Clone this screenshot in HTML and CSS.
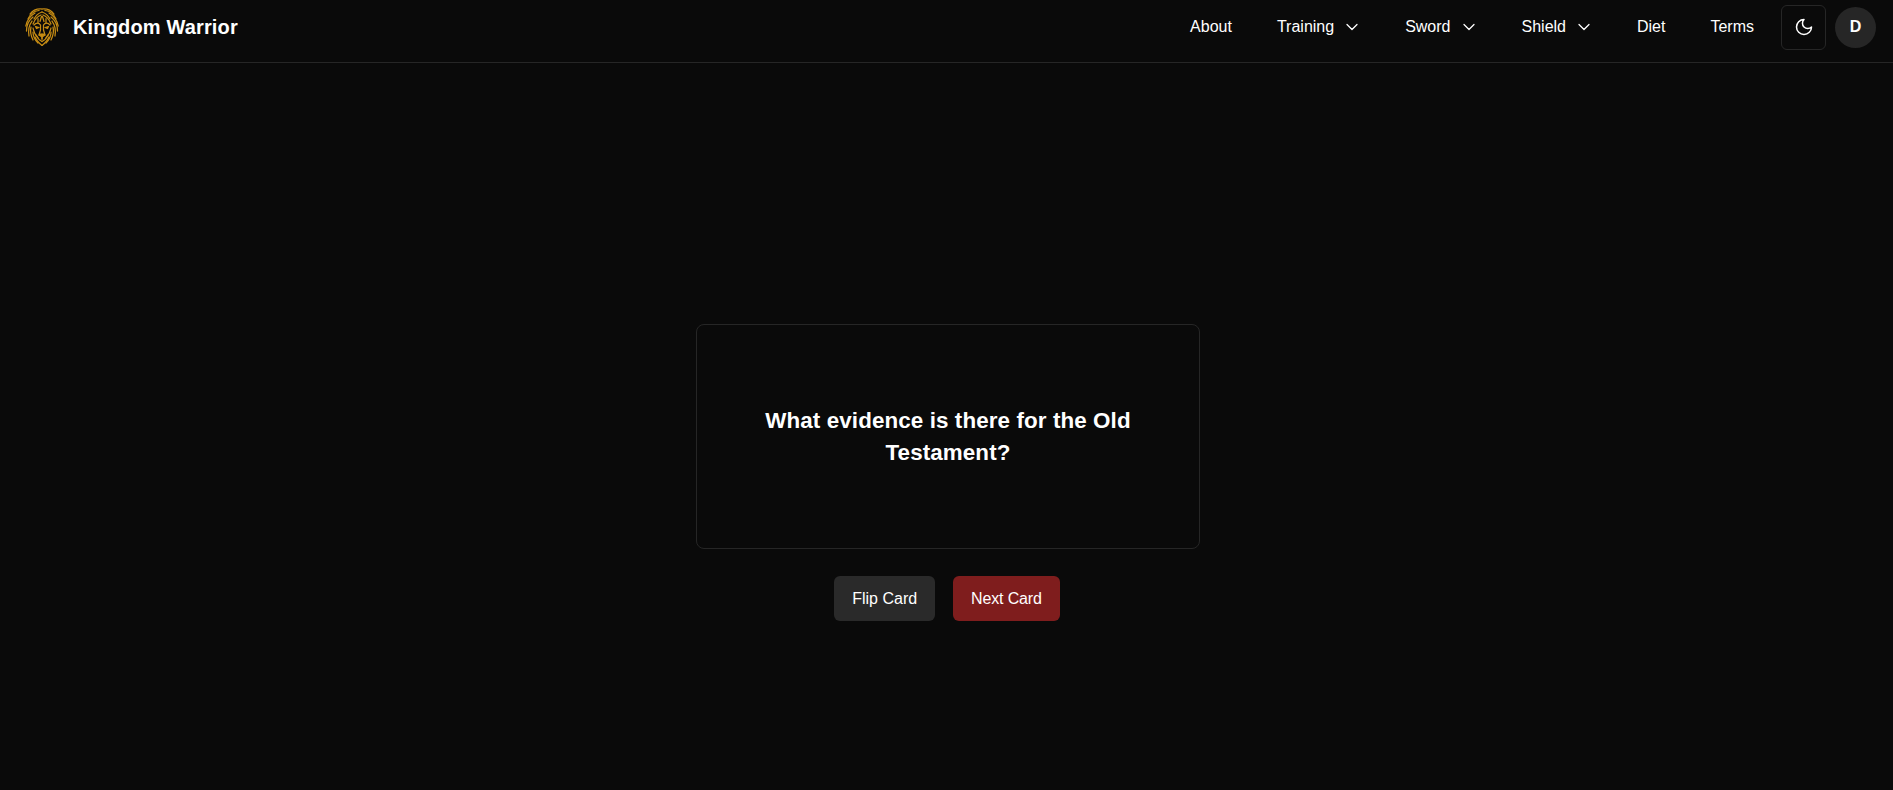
FILE: index.html
```html
<!DOCTYPE html>
<html lang="en">
<head>
<meta charset="utf-8">
<title>Kingdom Warrior</title>
<link rel="stylesheet" href="styles.css">
</head>
<body>
<header class="topbar">
  <a class="brand" href="#">
    <svg class="lion" viewBox="0 0 34 38" fill="none" stroke="#c68c14" stroke-width="1.25" stroke-linecap="round" stroke-linejoin="round">
      <g id="lion-half">
        <path d="M17 1C12 .5 8 2 5 6"/>
        <path d="M14 2.500C9 3 5 6 3 11"/>
        <path d="M10 5C5 8 2 12 .8 18"/>
        <path d="M8 9C4 12 1.500 17 1.500 23"/>
        <path d="M7 13C4 17 3 22 4 28"/>
        <path d="M6 19C5 23 6 28 8 32"/>
        <path d="M8 24C8 28 10 32 13 35"/>
        <path d="M10 29C11 32 14 35 17 37.500"/>
        <path d="M17 4C14 5 11 7 9 11"/>
        <path d="M16 7C13 8 10 11 8 16"/>
        <path d="M16.500 8.500L15 13.500M13 10.500L13 15"/>
        <path d="M9 17C11 14.500 14 14.500 15.500 17L15.500 22L14 27"/>
        <path d="M10.500 18.500L14 19.500L11.500 20.500Z" fill="#c68c14"/>
        <path d="M8 20C9 25 11 28 13 30"/>
        <path d="M14 27L17 29V31M11 27L14 31.500L17 33.500"/>
        <path d="M14.500 26H17V28.500Z" fill="#c68c14"/>
      </g>
      <use href="#lion-half" transform="matrix(-1 0 0 1 34 0)"/>
    </svg>
    <span class="brand-name">Kingdom Warrior</span>
  </a>
  <nav class="menu">
    <a class="link" href="#">About</a>
    <a class="link" href="#">Training
      <svg class="caret" viewBox="0 0 24 24" fill="none" stroke="currentColor" stroke-width="1.500" stroke-linecap="round" stroke-linejoin="round"><path d="m6 9 6 6 6-6"/></svg>
    </a>
    <a class="link" href="#">Sword
      <svg class="caret" viewBox="0 0 24 24" fill="none" stroke="currentColor" stroke-width="1.500" stroke-linecap="round" stroke-linejoin="round"><path d="m6 9 6 6 6-6"/></svg>
    </a>
    <a class="link" href="#">Shield
      <svg class="caret" viewBox="0 0 24 24" fill="none" stroke="currentColor" stroke-width="1.500" stroke-linecap="round" stroke-linejoin="round"><path d="m6 9 6 6 6-6"/></svg>
    </a>
    <a class="link" href="#">Diet</a>
    <a class="link" href="#">Terms</a>
  </nav>
  <button class="theme" type="button" aria-label="Toggle theme">
    <svg class="moon" viewBox="0 0 24 24" fill="none" stroke="currentColor" stroke-width="1.800" stroke-linecap="round" stroke-linejoin="round"><path d="M12 3a6 6 0 0 0 9 9 9 9 0 1 1-9-9Z"/></svg>
  </button>
  <div class="avatar">D</div>
</header>
<main class="stage">
  <div class="card">
    <p class="question">What evidence is there for the Old Testament?</p>
  </div>
  <div class="actions">
    <button class="btn btn-flip" type="button">Flip Card</button>
    <button class="btn btn-next" type="button">Next Card</button>
  </div>
</main>
</body>
</html>
```
FILE: styles.css
```css
* { box-sizing: border-box; }
html, body { height: 100%; }
body {
  margin: 0;
  display: flex;
  flex-direction: column;
  background: #0a0a0a;
  color: #fff;
  font-family: "Liberation Sans", Arial, sans-serif;
  overflow: hidden;
}
.topbar {
  flex: none;
  height: 63px;
  display: flex;
  align-items: center;
  padding: 0 17px 8px 25px;
  padding-top: 0;
  border-bottom: 1px solid #262626;
}
.brand {
  display: flex;
  align-items: center;
  gap: 14px;
  color: #fff;
  text-decoration: none;
}
.lion { width: 34px; height: 38px; display: block; }
.brand-name { font-size: 20px; font-weight: 700; letter-spacing: 0.15px; }
.menu {
  margin-left: auto;
  display: flex;
  align-items: center;
  gap: 45px;
}
.link {
  display: flex;
  align-items: center;
  gap: 10px;
  color: #fff;
  font-size: 16px;
  line-height: 24px;
  text-decoration: none;
}
.caret { width: 20px; height: 20px; margin: 0 -2px; display: block; }
.theme {
  margin-left: 27px;
  width: 45px;
  height: 45px;
  padding: 0;
  display: flex;
  align-items: center;
  justify-content: center;
  background: transparent;
  border: 1px solid #262626;
  border-radius: 6px;
  color: #fff;
}
.moon { width: 20px; height: 20px; display: block; }
.avatar {
  margin-left: 9px;
  width: 41px;
  height: 41px;
  display: flex;
  align-items: center;
  justify-content: center;
  border-radius: 50%;
  background: #262626;
  font-size: 16px;
  font-weight: 700;
}
.stage {
  flex: 1;
  display: flex;
  flex-direction: column;
  align-items: center;
  justify-content: center;
  gap: 27px;
  padding: 92px 0 0 1px;
}
.card {
  width: 504px;
  height: 225px;
  margin-left: 2px;
  display: flex;
  align-items: center;
  justify-content: center;
  padding: 1px 24px 0;
  border: 1px solid #262626;
  border-radius: 8px;
}
.question {
  margin: 0;
  max-width: 400px;
  font-size: 22.4px;
  line-height: 32px;
  font-weight: 700;
  letter-spacing: 0.1px;
  text-align: center;
}
.actions { display: flex; gap: 18px; }
.btn {
  height: 45px;
  padding: 0 18px;
  border: 0;
  border-radius: 6px;
  color: #fff;
  font-family: inherit;
  font-size: 16px;
}
.btn-flip { background: #2a2a2a; }
.btn-next { background: #7f1d1d; letter-spacing: -0.15px; }
```
